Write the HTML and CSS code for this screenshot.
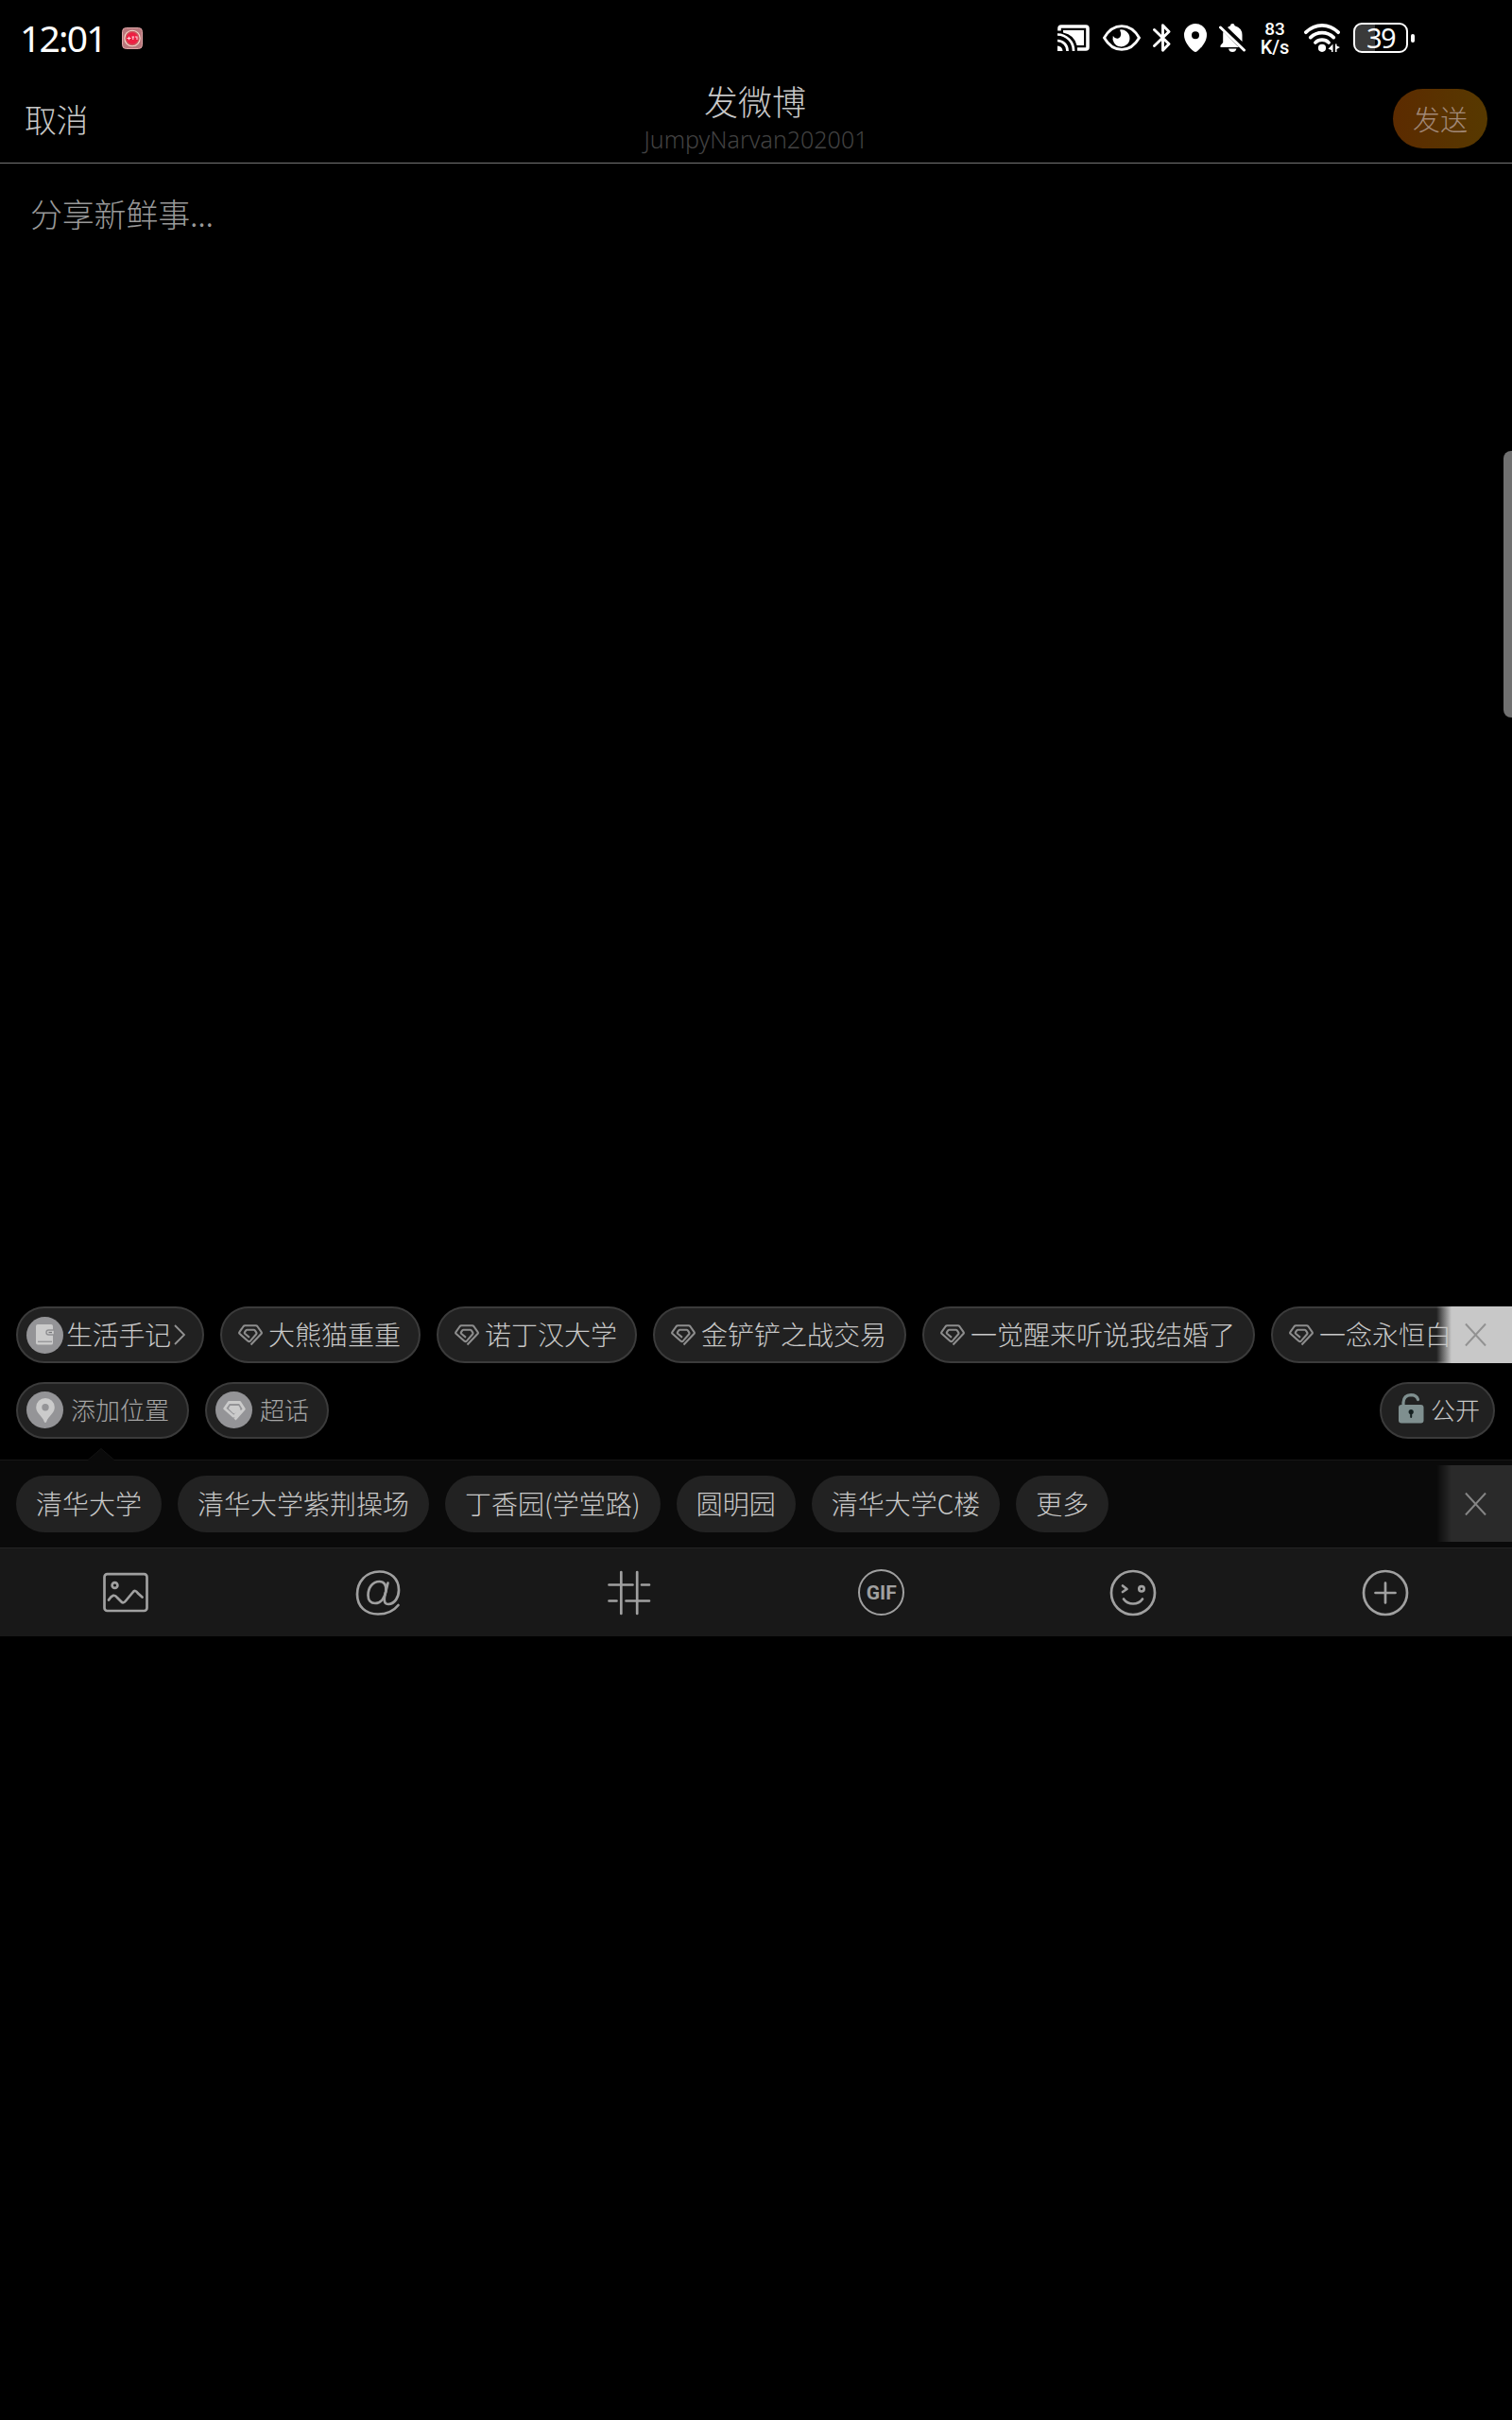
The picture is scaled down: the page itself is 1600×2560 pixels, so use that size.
FILE: index.html
```html
<!DOCTYPE html>
<html lang="zh-CN">
<head>
<meta charset="utf-8">
<title>发微博</title>
<link rel="stylesheet" href="styles.css">
</head>
<body>
<svg class="defs" width="0" height="0" aria-hidden="true">
  <symbol id="gem" viewBox="0 0 26 24">
    <path d="M13.500 22.500 24.600 10.800Q25.200 10 24.600 9.200L20.300 3Q19.700 2.200 18.800 2.200H7.200Q6.300 2.200 5.700 3L1.400 9.200Q.8 10 1.500 10.800L10.500 18.700Q11.800 19.600 13 18.400L19.200 11.300Q19.800 10.400 19.300 9.600L17.800 7.400Q17.300 6.800 16.500 6.800H9.500Q8.700 6.800 8.200 7.400L6.900 9.400Q6.500 10.200 7.100 10.800L12 14.900" fill="none" stroke="currentColor" stroke-width="2.100" stroke-linejoin="round"/>
  </symbol>
  <symbol id="cross" viewBox="0 0 24 28">
    <path d="M1 2 23 26M23 2 1 26" fill="none" stroke="currentColor" stroke-width="2"/>
  </symbol>
</svg>

<div class="statusbar">
  <span class="clock">12:01</span>
  <svg class="app-badge" width="22" height="23" viewBox="0 0 22 23">
    <rect x=".5" y=".5" width="21" height="22" rx="4" fill="#b9777c" stroke="#dda5a6"/>
    <circle cx="11" cy="11.5" r="8.2" fill="#c9585f" stroke="#f3d9c9" stroke-width="1.1"/>
    <circle cx="11" cy="11.5" r="6.2" fill="#ee1f42"/>
    <path d="M5.5 11.5h4M7.5 9.8v3.4M10.5 10h2.6M11.8 10v3M14 10h2v3" fill="none" stroke="#ffd5dc" stroke-width="1.1"/>
  </svg>
  <div class="status-icons">
    <svg class="i-cast" width="34" height="28" viewBox="0 0 34 28" fill="none" stroke="#fff">
      <path d="M2 6.500V4Q2 2 4 2H30Q32 2 32 4V24Q32 26 30 26H21" stroke-width="3.6"/>
      <path d="M6 6H28V22H20.500Q18 11 6 8.500Z" fill="#fff" stroke="none"/>
      <path d="M0 10.500A17 17 0 0 1 17 28M0 17A10.500 10.500 0 0 1 10.500 28" stroke-width="2.700"/>
      <path d="M0 22.500A5.500 5.500 0 0 1 5.500 28H0Z" fill="#fff" stroke="none"/>
    </svg>
    <svg class="i-eye" width="40" height="28" viewBox="0 0 40 28">
      <path d="M1.500 14C11-2.500 29-2.500 38.500 14C29 30.500 11 30.500 1.500 14Z" fill="none" stroke="#fff" stroke-width="2.800"/>
      <path d="M18 5.500A9 9 0 1 1 10.800 12Q13 15.500 16.500 14.500Q21 12.500 18 5.500Z" fill="#fff"/>
    </svg>
    <svg class="i-bt" width="19" height="30" viewBox="0 0 19 30" fill="none" stroke="#fff" stroke-width="2.900" stroke-linejoin="round" stroke-linecap="round">
      <path d="M1.500 6.500 17 21.500 10.500 28.200V1.800L17 8.500 1.500 23.500"/>
    </svg>
    <svg class="i-pin" width="24" height="30" viewBox="0 0 24 30">
      <path fill="#fff" fill-rule="evenodd" d="M12 0A12 12 0 0 1 24 12C24 19 18.500 25.500 13.800 29.300Q12 30.700 10.200 29.300C5.500 25.500 0 19 0 12A12 12 0 0 1 12 0ZM12 8.200A4 4 0 1 0 12 16.200A4 4 0 1 0 12 8.200Z"/>
    </svg>
    <svg class="i-bell" width="28" height="30" viewBox="0 0 28 30">
      <path fill="#fff" d="M9 4Q10.500 2.600 12 2.200Q12 0 14.200 0T16.600 2.200Q24.500 4.500 24.500 12V19ZM4.500 8.500 21 25H1.500V23L4.200 20V11Q4.200 9.500 4.500 8.500ZM10 26.500H18.500Q17.500 30 14.200 30T10 26.500Z"/>
      <path d="M1.500 4 26.500 28" stroke="#fff" stroke-width="3" stroke-linecap="round"/>
    </svg>
    <div class="netspeed"><span>83</span><span class="unit">K/s</span></div>
    <svg class="i-wifi" width="38" height="30" viewBox="0 0 38 30" fill="none" stroke="#fff" stroke-width="3.700" stroke-linecap="round">
      <path d="M1.900 9.200Q9.500 1.900 19 1.900T36.100 9.200M6.800 14.600Q12 9.600 19 9.600T31.200 14.600M12 20Q15 17.200 19 17.200T26 20"/>
      <circle cx="19" cy="25.800" r="4.100" fill="#fff" stroke="none"/>
      <path d="M30.500 21.500V30H29V28L25.500 26.800ZM33 30V21.500H34.500V23.500L38 25L34.500 27V30Z" fill="#fff" stroke="none"/>
    </svg>
    <div class="battery"><span>39</span></div>
    <i class="battery-nub"></i>
  </div>
</div>

<header class="header">
  <span class="cancel">取消</span>
  <div class="titles">
    <h1>发微博</h1>
    <p>JumpyNarvan202001</p>
  </div>
  <span class="send">发送</span>
</header>

<main class="editor">
  <p class="placeholder">分享新鲜事...</p>
  <i class="edge-handle"></i>
</main>

<section class="topics">
  <div class="pill journal">
    <span class="disc"><svg width="20" height="22" viewBox="0 0 20 22"><path d="M2 0H16Q18 0 18 2V20Q18 21.500 16 21.500H2Q0 21.500 0 19.500V2Q0 0 2 0Z" fill="#cbcbcb"/><path d="M2 18.300H17" stroke="#97979a" stroke-width="1.400"/><path d="M19.500 6H13.500Q11 6 11 8.500T13.500 11H19.500Z" fill="#cbcbcb" stroke="#919194" stroke-width="1.400"/><path d="M13.500 8.500H17" stroke="#77777a" stroke-width="1.300"/></svg></span>
    <span>生活手记</span>
    <svg class="chev" width="12" height="22" viewBox="0 0 12 22"><path d="M1 1 11 11 1 21" fill="none" stroke="#929292" stroke-width="1.900"/></svg>
  </div>
  <div class="pill topic"><svg class="gem"><use href="#gem"/></svg><span>大熊猫重重</span></div>
  <div class="pill topic"><svg class="gem"><use href="#gem"/></svg><span>诺丁汉大学</span></div>
  <div class="pill topic"><svg class="gem"><use href="#gem"/></svg><span>金铲铲之战交易</span></div>
  <div class="pill topic"><svg class="gem"><use href="#gem"/></svg><span>一觉醒来听说我结婚了</span></div>
  <div class="pill topic"><svg class="gem"><use href="#gem"/></svg><span>一念永恒白</span></div>
  <div class="close close-light"><svg width="23" height="28"><use href="#cross"/></svg></div>
</section>

<section class="options">
  <div class="pill option"><span class="disc"><svg width="20" height="26" viewBox="0 0 20 26"><path fill="#cbcbcb" fill-rule="evenodd" d="M10 0A9.800 9.800 0 0 1 19.800 9.800C19.800 16 13 19 11.200 25Q10 27 8.800 25C7 19 .2 16 .2 9.800A9.800 9.800 0 0 1 10 0ZM10 6A3.700 3.700 0 1 0 10 13.400A3.700 3.700 0 1 0 10 6Z"/></svg></span><span>添加位置</span></div>
  <div class="pill option"><span class="disc"><svg width="26" height="24" viewBox="0 0 26 24"><path d="M13.500 21.500 23.300 10.500 18.800 3.500H7.200L2.700 10 11.500 17.800Q12.500 18.500 13.500 17.500L19 11" fill="none" stroke="#cbcbcb" stroke-width="2.800" stroke-linejoin="round"/><path d="M8.500 7H17.500L19.500 10.200 13.500 15Q12.500 15.600 11.500 14.800L6.800 10Z" fill="#cbcbcb"/></svg></span><span>超话</span></div>
  <div class="pill visibility"><svg width="27" height="32" viewBox="0 0 27 32"><path d="M5 14V9.500Q5.500 2 13 1.700Q19 1.700 20.500 6.500" fill="none" stroke="#7f8f8f" stroke-width="3.200" stroke-linecap="round"/><rect y="12" width="26.500" height="19.500" rx="3" fill="#7f8f8f"/><circle cx="13.200" cy="19.500" r="2.600" fill="#152020"/><path d="M13.200 19.500V25" stroke="#152020" stroke-width="2" stroke-linecap="round"/></svg><span>公开</span></div>
</section>

<section class="places">
  <svg class="caret" width="28" height="13" viewBox="0 0 28 13"><path d="M0 13 14 0 28 13Z" fill="#0a0a0a"/><path d="M0 12.500 14 .5 28 12.500" fill="none" stroke="#131313"/></svg>
  <div class="place">清华大学</div>
  <div class="place">清华大学紫荆操场</div>
  <div class="place">丁香园(学堂路)</div>
  <div class="place">圆明园</div>
  <div class="place">清华大学C楼</div>
  <div class="place">更多</div>
  <div class="close close-dark"><svg width="23" height="28"><use href="#cross"/></svg></div>
</section>

<nav class="toolbar">
  <div><svg width="50" height="50" viewBox="0 0 50 50"><rect x="2.500" y="5.200" width="45" height="38.800" rx="3"/><circle cx="13.500" cy="17" r="2.900"/><path d="M7 32.500Q12 24.500 16 30L20.500 34.500Q22.500 36.500 25 33.500L32.500 24.500Q35 21 38 25.500L42.500 29.500"/></svg></div>
  <div><svg width="50" height="50" viewBox="0 0 50 50"><path d="M35.500 14.500 32 29Q30.500 37 36 37C43 36.500 47 29.500 47 22C47 10 38.500 2.500 26.500 2.500C12 2.500 3 13.500 3 26.500C3 39.500 12 47.500 25 47.500Q39 47.500 46.500 38"/><path d="M33.300 23.500C34.500 16.500 31 13 26.500 13C19 13 14.500 20 14.500 27.500C14.500 33 17.500 36 22 36C27.500 36 31.800 31 33.300 23.500Z"/></svg></div>
  <div><svg width="50" height="50" viewBox="0 0 50 50"><path d="M16.300 3V47M33.200 3V47M3.500 16.500H28.500M38 16.500H46M3.500 33.500H11.500M21.500 33.500H46"/></svg></div>
  <div><span class="gif">GIF</span></div>
  <div><svg width="50" height="50" viewBox="0 0 50 50"><circle cx="25" cy="25" r="23"/><path d="M14 17.500 18.500 21 14 24M15 31.500Q18.500 36.500 25 36.500T35 31.500"/><circle cx="34" cy="20.800" r="2.700"/></svg></div>
  <div><svg width="50" height="50" viewBox="0 0 50 50"><circle cx="25" cy="25" r="23"/><path d="M25 14.500V35.500M14.500 25H35.500"/></svg></div>
</nav>
</body>
</html>
```
FILE: styles.css
```css
* { box-sizing: border-box; }

body {
  margin: 0;
  width: 1600px;
  height: 2560px;
  display: flex;
  flex-direction: column;
  background: #000;
  color: #c8c8c8;
  font-family: "Noto Sans CJK SC Light", "Noto Sans CJK SC", sans-serif;
  font-weight: 300;
  overflow: hidden;
}

h1, p { margin: 0; font-weight: 300; }
svg { display: block; flex: none; }
.defs { position: absolute; }

/* status bar */
.statusbar {
  height: 80px;
  padding-left: 21px;
  display: flex;
  align-items: center;
  flex: none;
}
.clock {
  width: 108px;
  font: 400 39px/50px "Noto Sans", sans-serif;
  letter-spacing: -1.8px;
  color: #fff;
  white-space: nowrap;
}
.app-badge { margin-top: 1px; }
.status-icons {
  margin-left: auto;
  margin-right: 103px;
  display: flex;
  align-items: center;
  color: #fff;
}
.i-eye { margin-left: 14px; }
.i-bt { margin-left: 13px; }
.i-pin { margin-left: 14px; }
.i-bell { margin-left: 13px; }
.netspeed {
  width: 34px;
  margin-left: 14px;
  display: flex;
  flex-direction: column;
  align-items: center;
  font: 500 19px/19px Roboto, sans-serif;
  white-space: nowrap;
}
.netspeed .unit { font-size: 20px; line-height: 20px; }
.i-wifi { margin-left: 14px; }
.battery {
  width: 58px;
  height: 32px;
  margin-left: 14px;
  border: 2.500px solid #fff;
  border-radius: 9px;
  background: linear-gradient(90deg, #3a3a3a 39%, #000 39%);
  display: flex;
  align-items: center;
  justify-content: center;
  font: 400 29px/28px "Noto Sans", sans-serif;
  letter-spacing: -1.5px;
}
.battery-nub {
  width: 4px;
  height: 9px;
  margin-left: 3px;
  border-radius: 2px;
  background: #fff;
}

/* header */
.header {
  height: 93px;
  padding: 0 26px;
  border-bottom: 1px solid #757575;
  display: grid;
  grid-template-columns: 1fr auto 1fr;
  flex: none;
}
.cancel { font-size: 34px; line-height: 91px; letter-spacing: -0.5px; }
.titles { display: flex; flex-direction: column; align-items: center; }
.titles h1 { margin-right: 2px; font-size: 36px; line-height: 53px; }
.titles p {
  font: 300 25px/28px "Noto Sans", sans-serif;
  color: #424242;
}
.send {
  width: 100px;
  height: 63px;
  margin-top: 14px;
  justify-self: end;
  border-radius: 32px;
  background: linear-gradient(90deg, #5c2b00, #573900);
  color: #a18877;
  font-size: 29px;
  line-height: 62px;
  text-align: center;
}

/* editor */
.editor { height: 1209px; padding: 28px 32px; position: relative; flex: none; }
.placeholder { font-size: 34px; line-height: 50px; letter-spacing: -0.2px; color: #999; }
.edge-handle {
  position: absolute;
  top: 304px;
  right: 0;
  width: 9px;
  height: 282px;
  border-radius: 8px 0 0 8px;
  background: #707070;
}

/* pill rows */
.topics, .options {
  height: 60px;
  padding-left: 17px;
  display: flex;
  gap: 17px;
  position: relative;
  flex: none;
}
.topics { overflow: hidden; }
.pill {
  height: 60px;
  border: 2px solid #3b3b3b;
  border-radius: 30px;
  background: #212121;
  display: flex;
  align-items: center;
  flex: none;
  font-size: 28px;
  line-height: 54px;
  white-space: nowrap;
}
.pill > span:not(.disc) { margin-bottom: 2px; }
.disc {
  width: 39px;
  height: 39px;
  border-radius: 50%;
  background: #949497;
  display: flex;
  align-items: center;
  justify-content: center;
}
.journal { width: 199px; padding-left: 9px; gap: 3px; }
.journal > span:not(.disc) { letter-spacing: -0.3px; }
.topic { padding: 0 19px 0 17px; gap: 6px; }
.gem { width: 26px; height: 24px; color: #8d8d8d; }

.close {
  position: absolute;
  top: 0;
  right: 0;
  width: 80px;
  height: 60px;
  padding-right: 27px;
  display: flex;
  align-items: center;
  justify-content: flex-end;
}
.close-light {
  background: linear-gradient(90deg, #c8c8c800, #c8c8c8 16px);
  color: #929292;
}

.options { height: 82px; margin-top: 20px; padding-right: 18px; }
.option {
  padding: 0 19px 0 9px;
  gap: 8px;
  font-size: 26px;
  color: #a5a5a5;
}
.option .disc { margin-bottom: 1px; }
.visibility {
  margin-left: auto;
  padding: 0 14px 0 18px;
  gap: 7px;
  font-size: 26px;
}
.visibility svg { margin-bottom: 4px; }

/* places */
.places {
  height: 93px;
  padding: 16px 0 0 17px;
  border-top: 1px solid #171717;
  background: #0a0a0a;
  display: flex;
  gap: 17px;
  position: relative;
  flex: none;
}
.caret { position: absolute; left: 93px; top: -13px; }
.place {
  height: 60px;
  padding: 0 21px;
  border-radius: 30px;
  background: #222;
  font-size: 28px;
  line-height: 59px;
  white-space: nowrap;
}
.close-dark {
  top: 5px;
  height: 81px;
  background: linear-gradient(90deg, #2a2a2a00, #2a2a2a 16px);
  color: #858585;
}

/* toolbar */
.toolbar {
  height: 94px;
  padding-right: 1px;
  border-top: 1px solid #242424;
  background: #181818;
  display: grid;
  grid-template-columns: repeat(6, 1fr);
  flex: none;
}
.toolbar div { display: flex; align-items: center; justify-content: center; }
.toolbar svg {
  fill: none;
  stroke: #a0a0a0;
  stroke-width: 2.700;
  stroke-linecap: round;
  stroke-linejoin: round;
}
.gif {
  width: 49px;
  height: 49px;
  border: 2.700px solid #a0a0a0;
  border-radius: 50%;
  color: #a0a0a0;
  font: 700 21px/46px Roboto, sans-serif;
  text-align: center;
}
```
